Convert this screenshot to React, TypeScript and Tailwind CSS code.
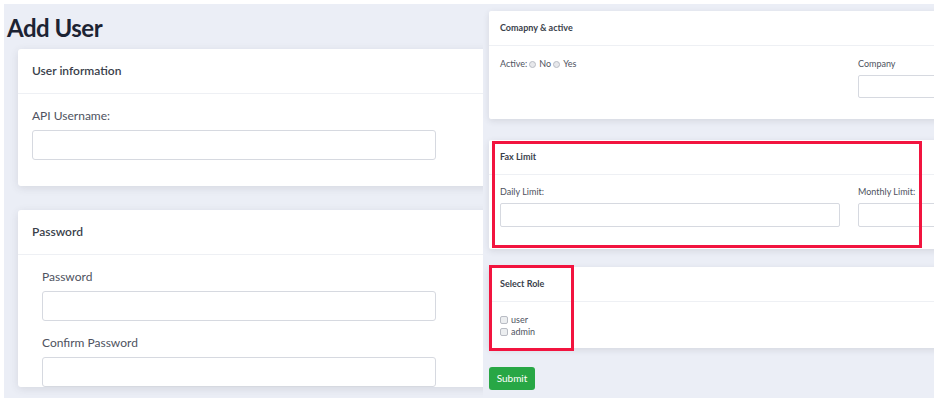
import React from 'react';

const font = { fontFamily: 'Lato, "Open Sans", sans-serif' };

// Left half: big scale
const BigCard: React.FC<{ title: string; className?: string; children: React.ReactNode }> = ({
  title,
  className = '',
  children,
}) => (
  <div className={`bg-white rounded-[3px] shadow-[0_2px_8px_rgba(58,59,69,0.12)] w-[520px] ${className}`}>
    <div className="h-[45px] px-[14px] flex items-center border-b border-[#eef0f4]">
      <h6 className="text-[12px] font-semibold text-[#3a3f4b]">{title}</h6>
    </div>
    {children}
  </div>
);

// Right half: small scale
const SmallCard: React.FC<{ title: string; className?: string; children: React.ReactNode }> = ({
  title,
  className = '',
  children,
}) => (
  <div className={`bg-white rounded-[2px] shadow-[0_2px_6px_rgba(58,59,69,0.12)] w-[520px] ${className}`}>
    <div className="h-[35px] px-[11px] flex items-center border-b border-[#eef0f4]">
      <h6 className="text-[9px] font-bold text-[#3a3f4b]">{title}</h6>
    </div>
    {children}
  </div>
);

const Radio: React.FC<{ label: string }> = ({ label }) => (
  <span className="inline-flex items-center gap-[3px] ml-[2px]">
    <span className="w-[7px] h-[7px] rounded-full border border-[#b9bcc4] bg-[#e7e8eb]" />
    <span>{label}</span>
  </span>
);

const Check: React.FC<{ label: string }> = ({ label }) => (
  <label className="flex items-center gap-[3px] h-[12px]">
    <span className="w-[8px] h-[8px] rounded-[2px] border border-[#b9bcc4] bg-[#eceef0]" />
    <span>{label}</span>
  </label>
);

export default function App() {
  return (
    <div className="w-[934px] h-[407px] bg-white pt-[4px] pl-[4px] flex overflow-hidden" style={font}>
      {/* left screenshot */}
      <div className="w-[479px] h-[394px] bg-[#ebeef6] overflow-hidden shrink-0">
        <h1 className="text-[24px] font-bold text-[#1c2333] tracking-[-0.5px] leading-none pl-[3px] pt-[12px] h-[45px]">
          Add User
        </h1>
        <BigCard title="User information" className="ml-[14px]">
          <div className="px-[14px] pt-[14px] pb-[26px]">
            <label className="block text-[12px] text-[#4e5260] mb-[6px] leading-[16px]">API Username:</label>
            <input className="block w-[404px] h-[30px] border border-[#d6d9e0] rounded-[3px] bg-white" />
          </div>
        </BigCard>
        <BigCard title="Password" className="ml-[14px] mt-[24px]">
          <div className="px-[24px] pt-[14px]">
            <label className="block text-[12px] text-[#4e5260] mb-[6px] leading-[16px]">Password</label>
            <input type="password" className="block w-[394px] h-[30px] border border-[#d6d9e0] rounded-[3px] bg-white" />
            <label className="block text-[12px] text-[#4e5260] mt-[14px] mb-[6px] leading-[16px]">Confirm Password</label>
            <input type="password" className="block w-[394px] h-[30px] border border-[#d6d9e0] rounded-[3px] bg-white" />
          </div>
        </BigCard>
      </div>

      {/* right screenshot */}
      <div className="relative w-[451px] h-[394px] bg-[#ebeef6] overflow-hidden shrink-0 pl-[6px] pt-[7px]">
        <SmallCard title="Comapny & active">
          <div className="flex px-[11px] pt-[12px] h-[73px] text-[9px] text-[#4e5260]">
            <div className="w-[358px] shrink-0 flex items-start leading-[12px]">
              <span>Active:</span>
              <Radio label="No" />
              <Radio label="Yes" />
            </div>
            <div className="shrink-0">
              <div className="leading-[12px] mb-[5px]">Company</div>
              <div className="w-[100px] h-[23px] border border-[#d6d9e0] rounded-[2px]" />
            </div>
          </div>
        </SmallCard>

        <SmallCard title="Fax Limit" className="mt-[21px]">
          <div className="flex px-[11px] pt-[11px] h-[74px] text-[9px] text-[#4e5260]">
            <div className="w-[340px] shrink-0">
              <div className="leading-[12px] mb-[5px]">Daily Limit:</div>
              <div className="w-[340px] h-[24px] border border-[#d6d9e0] rounded-[2px]" />
            </div>
            <div className="ml-[18px] shrink-0">
              <div className="leading-[12px] mb-[5px]">Monthly Limit:</div>
              <div className="w-[100px] h-[24px] border border-[#d6d9e0] rounded-[2px]" />
            </div>
          </div>
        </SmallCard>

        <SmallCard title="Select Role" className="mt-[18px]">
          <div className="px-[11px] pt-[12px] h-[46px] text-[9px] text-[#4e5260]">
            <Check label="user" />
            <Check label="admin" />
          </div>
        </SmallCard>

        <button className="mt-[19px] w-[46px] h-[23px] bg-[#28a745] text-white text-[10px] rounded-[3px]">
          Submit
        </button>

        {/* annotation boxes */}
        <div className="absolute left-[9px] top-[137px] w-[430px] h-[107px] border-[3px] border-[#f2143f]" />
        <div className="absolute left-[6px] top-[261px] w-[85px] h-[86px] border-[3px] border-[#f2143f]" />
      </div>
    </div>
  );
}
